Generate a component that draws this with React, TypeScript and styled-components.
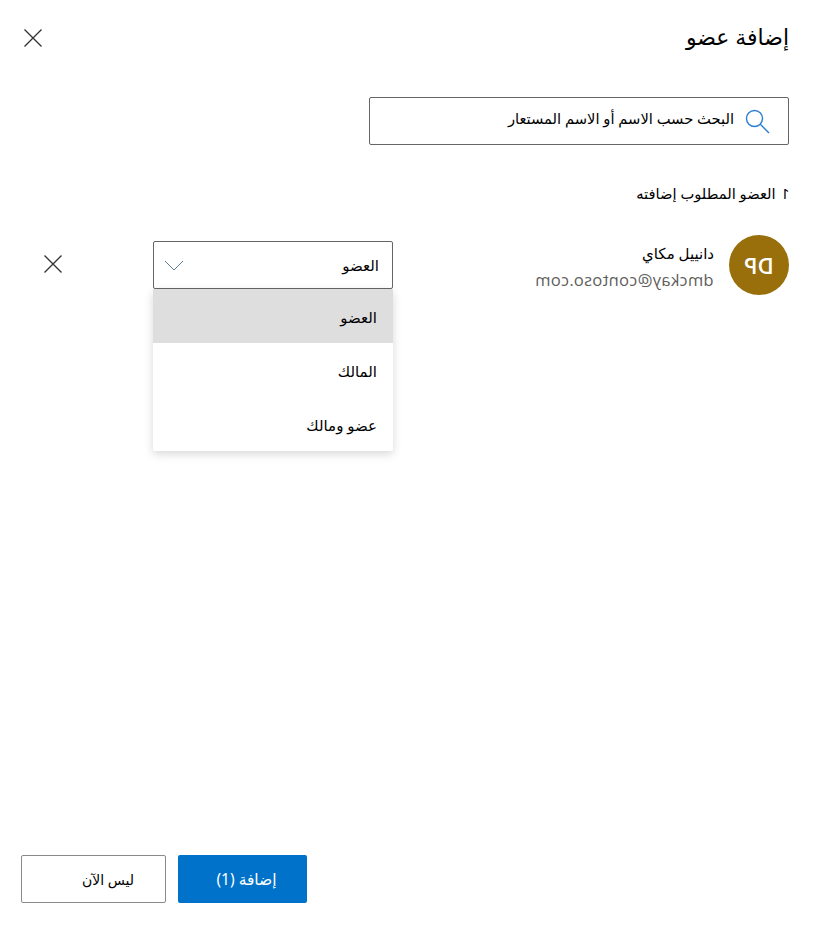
import React from "react";
import styled, { createGlobalStyle } from "styled-components";

const Global = createGlobalStyle`
  html, body { margin: 0; padding: 0; background: #fff; }
  * { box-sizing: border-box; }
`;

const font = `"Segoe UI", "Noto Sans", "DejaVu Sans", sans-serif`;

const Panel = styled.div`
  direction: rtl;
  width: 817px;
  height: 932px;
  padding: 0 28px 29px 21px;
  display: flex;
  flex-direction: column;
  font-family: ${font};
  color: #000;
  background: #fff;
`;
const Header = styled.header`
  height: 75px;
  display: flex;
  align-items: center;
  justify-content: space-between;
`;
const Title = styled.h1`
  margin: -4px 0 0;
  font-size: 22px;
  font-weight: 400;
  line-height: 30px;
`;
const IconButton = styled.button`
  width: 24px;
  height: 24px;
  padding: 0;
  border: 0;
  background: none;
  display: flex;
  align-items: center;
  justify-content: center;
`;
const SearchBox = styled.div`
  margin-top: 22px;
  width: 420px;
  height: 48px;
  border: 1px solid #666;
  border-radius: 2px;
  display: flex;
  align-items: center;
  gap: 10px;
  padding: 0 18px 0 12px;
`;
const SearchText = styled.span`
  font-size: 14.7px;
  line-height: 20px;
  margin-top: -6px;
`;
const SectionLabel = styled.div`
  margin-top: 37px;
  height: 22px;
  font-size: 14.7px;
  line-height: 22px;
  display: flex;
  gap: 5px;
`;
const Mirrored = styled.span`
  display: inline-block;
  transform: scaleX(-1);
`;
const MemberRow = styled.div`
  margin-top: 31px;
  display: grid;
  grid-template-columns: 60px 1fr 240px 132px;
  align-items: center;
`;
const Avatar = styled.div`
  width: 60px;
  height: 60px;
  border-radius: 50%;
  background: #986f0b;
  color: #fff;
  font-family: "Open Sans", sans-serif;
  font-size: 22px;
  font-weight: 600;
  display: flex;
  align-items: center;
  justify-content: center;
  direction: ltr;
`;
const MemberInfo = styled.div`
  padding: 2px 15px 0;
  display: flex;
  flex-direction: column;
  gap: 5px;
`;
const MemberName = styled.div`
  font-size: 15px;
  line-height: 22px;
`;
const MemberEmail = styled.div`
  font-family: "Open Sans", sans-serif;
  font-size: 16.5px;
  letter-spacing: 0.3px;
  line-height: 21px;
  color: #605e5c;
  direction: ltr;
  transform: scaleX(-1);
  width: max-content;
`;
const SelectWrap = styled.div`
  position: relative;
  width: 240px;
`;
const SelectBox = styled.div`
  height: 48px;
  border: 1px solid #666;
  border-radius: 2px;
  display: flex;
  align-items: center;
  justify-content: space-between;
  padding: 0 13px 0 10px;
  font-size: 15px;
`;
const Menu = styled.ul`
  position: absolute;
  top: 48px;
  right: 0;
  width: 240px;
  margin: 0;
  padding: 0;
  list-style: none;
  background: #fff;
  border-radius: 2px;
  box-shadow: 0 3px 10px rgba(0, 0, 0, 0.16);
`;
const MenuItem = styled.li<{ $selected?: boolean }>`
  height: 54px;
  padding: 2px 16px 0;
  display: flex;
  align-items: center;
  font-size: 15px;
  background: ${(p) => (p.$selected ? "#dedede" : "transparent")};
`;
const RemoveButton = styled(IconButton)`
  justify-self: end;
  margin-left: 20px;
  margin-top: -2px;
`;
const Footer = styled.footer`
  margin-top: auto;
  display: flex;
  justify-content: flex-end;
  gap: 12px;
`;
const Primary = styled.button`
  width: 129px;
  height: 48px;
  padding: 0 0 0 8px;
  border: 0;
  border-radius: 2px;
  background: #0072c9;
  color: #fff;
  font-family: ${font};
  font-size: 15.5px;
`;
const Secondary = styled.button`
  width: 145px;
  height: 48px;
  padding: 0 0 0 29px;
  border: 1px solid #8a8a8a;
  border-radius: 2px;
  background: #fff;
  color: #000;
  font-family: ${font};
  font-size: 14px;
`;

const CloseIcon = () => (
  <svg width="20" height="20" viewBox="0 0 20 20" fill="none" stroke="#323130" strokeWidth="1.3">
    <path d="M1.5 1.5 18.5 18.5M18.5 1.5 1.5 18.5" />
  </svg>
);
const SearchIcon = () => (
  <svg width="26" height="26" viewBox="0 0 26 26" fill="none" stroke="#2b7fd0" strokeWidth="1.4">
    <circle cx="10.5" cy="10.5" r="8" />
    <path d="M16.3 16.3 25 25" />
  </svg>
);
const ChevronIcon = () => (
  <svg width="20" height="11" viewBox="0 0 20 11" fill="none" stroke="#5f7f99" strokeWidth="1">
    <path d="M1 1 10 10 19 1" />
  </svg>
);

export default function App() {
  return (
    <Panel>
      <Global />
      <Header>
        <Title>إضافة عضو</Title>
        <IconButton aria-label="إغلاق"><CloseIcon /></IconButton>
      </Header>
      <SearchBox>
        <SearchIcon />
        <SearchText>البحث حسب الاسم أو الاسم المستعار</SearchText>
      </SearchBox>
      <SectionLabel>
        <Mirrored>1</Mirrored>
        <span>العضو المطلوب إضافته</span>
      </SectionLabel>
      <MemberRow>
        <Avatar><Mirrored>DP</Mirrored></Avatar>
        <MemberInfo>
          <MemberName>دانييل مكاي</MemberName>
          <MemberEmail>dmckay@contoso.com</MemberEmail>
        </MemberInfo>
        <SelectWrap>
          <SelectBox>
            <span>العضو</span>
            <ChevronIcon />
          </SelectBox>
          <Menu>
            <MenuItem $selected>العضو</MenuItem>
            <MenuItem>المالك</MenuItem>
            <MenuItem>عضو ومالك</MenuItem>
          </Menu>
        </SelectWrap>
        <RemoveButton aria-label="إزالة"><CloseIcon /></RemoveButton>
      </MemberRow>
      <Footer>
        <Primary>إضافة (1)</Primary>
        <Secondary>ليس الآن</Secondary>
      </Footer>
    </Panel>
  );
}
